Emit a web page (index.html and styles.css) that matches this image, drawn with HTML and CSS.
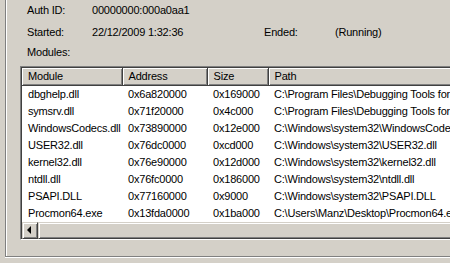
FILE: index.html
```html
<!DOCTYPE html>
<html>
<head>
<meta charset="utf-8">
<link rel="stylesheet" href="styles.css">
</head>
<body>
<div class="group">
  <div class="info">
    <div class="info-row r1"><span>Auth ID:</span><span>00000000:000a0aa1</span></div>
    <div class="info-row r2"><span>Started:</span><span>22/12/2009 1:32:36</span><span>Ended:</span><span>(Running)</span></div>
    <div class="info-row r3"><span>Modules:</span></div>
  </div>
  <div class="listview">
    <table class="grid">
      <colgroup><col class="c1"><col class="c2"><col class="c3"><col class="c4"></colgroup>
      <thead>
        <tr><th>Module</th><th>Address</th><th>Size</th><th>Path</th></tr>
      </thead>
      <tbody>
        <tr><td>dbghelp.dll</td><td>0x6a820000</td><td>0x169000</td><td>C:\Program Files\Debugging Tools for Windows (x64)\dbghelp.dll</td></tr>
        <tr><td>symsrv.dll</td><td>0x71f20000</td><td>0x4c000</td><td>C:\Program Files\Debugging Tools for Windows (x64)\symsrv.dll</td></tr>
        <tr><td>WindowsCodecs.dll</td><td>0x73890000</td><td>0x12e000</td><td>C:\Windows\system32\WindowsCodecs.dll</td></tr>
        <tr><td>USER32.dll</td><td>0x76dc0000</td><td>0xcd000</td><td>C:\Windows\system32\USER32.dll</td></tr>
        <tr><td>kernel32.dll</td><td>0x76e90000</td><td>0x12d000</td><td>C:\Windows\system32\kernel32.dll</td></tr>
        <tr><td>ntdll.dll</td><td>0x76fc0000</td><td>0x186000</td><td>C:\Windows\system32\ntdll.dll</td></tr>
        <tr><td>PSAPI.DLL</td><td>0x77160000</td><td>0x9000</td><td>C:\Windows\system32\PSAPI.DLL</td></tr>
        <tr><td>Procmon64.exe</td><td>0x13fda0000</td><td>0x1ba000</td><td>C:\Users\Manz\Desktop\Procmon64.exe</td></tr>
      </tbody>
    </table>
    <div class="hscroll">
      <div class="sbtn"><span class="arrow-left"></span></div>
      <div class="thumb"></div>
    </div>
  </div>
</div>
</body>
</html>
```
FILE: styles.css
```css
html, body {
  margin: 0;
  padding: 0;
  background: #d4d0c8;
  overflow: hidden;
  width: 450px;
  height: 263px;
}
body {
  font-family: "Liberation Sans", Arial, sans-serif;
  font-size: 11px;
  letter-spacing: -0.2px;
  color: #000;
}
.group {
  margin-left: 5px;
  width: 520px;
  height: 257px;
  box-sizing: border-box;
  border-left: 1px solid #808080;
  border-bottom: 1px solid #808080;
  box-shadow: inset 1px 0 0 #fff, 0 1px 0 #fff;
  padding-left: 14px;
}
.info {
  padding-left: 7px;
  padding-top: 3px;
}
.info-row {
  display: grid;
  grid-template-columns: 65px 172px 71px auto;
  height: 14px;
  line-height: 14px;
  white-space: nowrap;
}
.r2 { margin-top: 8px; }
.r3 { margin-top: 6px; }
.listview {
  margin-top: 7px;
  width: 500px;
  height: 174px;
  box-sizing: border-box;
  background: #fff;
  border-top: 1px solid #808080;
  border-left: 1px solid #808080;
  border-bottom: 1px solid #fff;
  border-right: 1px solid #fff;
  box-shadow: inset 1px 1px 0 #404040, inset -1px -1px 0 #d4d0c8;
  padding: 1px;
  display: flex;
  flex-direction: column;
}
.grid {
  border-collapse: collapse;
  table-layout: fixed;
  width: 496px;
}
.c1 { width: 100px; }
.c2 { width: 85px; }
.c3 { width: 61px; }
.c4 { width: 250px; }
.grid th {
  height: 17px;
  padding: 0 0 0 6px;
  text-align: left;
  font-weight: normal;
  background: #d4d0c8;
  box-sizing: border-box;
  box-shadow: inset 1px 1px 0 #fff, inset -1px -1px 0 #808080;
  border-right: 1px solid #404040;
  border-bottom: 1px solid #404040;
  white-space: nowrap;
  overflow: hidden;
  line-height: 15px;
}
.grid td {
  height: 17px;
  padding: 0 0 0 6px;
  white-space: nowrap;
  overflow: hidden;
  line-height: 17px;
}
.hscroll {
  margin-top: auto;
  height: 17px;
  display: flex;
  background: #e6e3dd;
}
.sbtn, .thumb {
  background: #d4d0c8;
  box-sizing: border-box;
  border-top: 1px solid #d4d0c8;
  border-left: 1px solid #d4d0c8;
  border-right: 1px solid #404040;
  border-bottom: 1px solid #404040;
  box-shadow: inset 1px 1px 0 #fff, inset -1px -1px 0 #808080;
}
.sbtn {
  width: 16px;
  height: 17px;
  display: flex;
  align-items: center;
  justify-content: center;
}
.thumb {
  flex: 1;
  height: 17px;
}
.arrow-left {
  width: 0;
  height: 0;
  border-top: 4px solid transparent;
  border-bottom: 4px solid transparent;
  border-right: 4px solid #000;
  margin-left: -2px;
}
```
